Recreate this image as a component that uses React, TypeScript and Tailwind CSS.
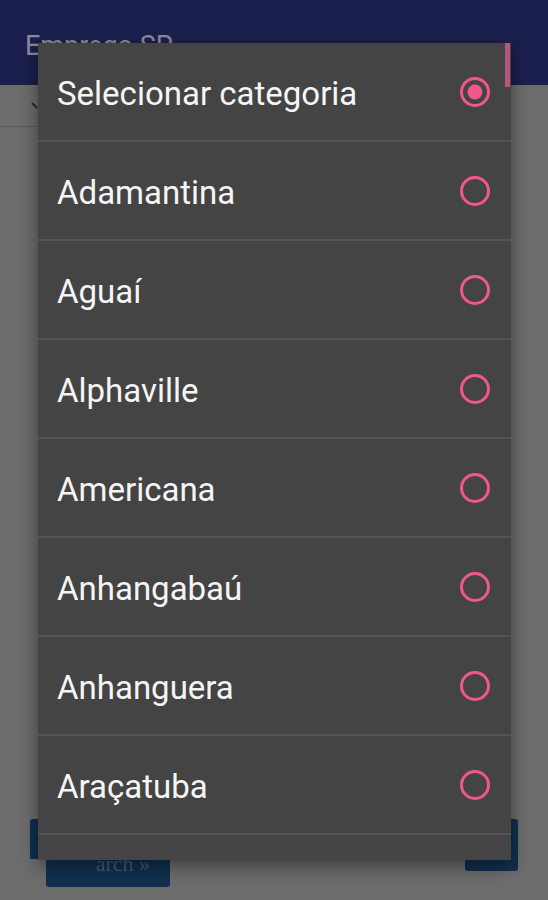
const cities = [
  "Selecionar categoria",
  "Adamantina",
  "Aguaí",
  "Alphaville",
  "Americana",
  "Anhangabaú",
  "Anhanguera",
  "Araçatuba",
  "Araraquara",
];

function Radio({ checked }: { checked: boolean }) {
  return (
    <svg width="32" height="32" viewBox="0 0 32 32">
      <circle cx="16" cy="16" r="13.5" fill="none" stroke="#f3578a" strokeWidth="3" />
      {checked && <circle cx="16" cy="16" r="7.5" fill="#f3578a" />}
    </svg>
  );
}

export default function App() {
  return (
    <div className="relative w-[548px] h-[900px] overflow-hidden bg-[#6d6d6d] font-['Roboto',sans-serif]">
      {/* page behind the dialog */}
      <header className="h-[85px] bg-[#1b1f4d] pl-[25px] pt-[26px]">
        <span className="text-[27px] text-[#8b8c98]">Emprego SP</span>
      </header>
      <div className="flex items-center h-[42px] w-[60px] pl-[30px] border-b border-[#5a5a5a]">
        <svg width="12" height="12" viewBox="0 0 12 12">
          <path d="M2 3 L7 8" stroke="#2a2a2a" strokeWidth="2" />
        </svg>
      </div>
      <div className="flex justify-between px-[30px] mt-[692px]">
        <div className="flex flex-col">
          <div className="w-[120px] h-[40px] rounded-t-[3px] bg-[#10304f]" />
          <div className="ml-[16px] -mt-[30px] w-[124px] h-[58px] rounded-[3px] bg-[#10304f] flex items-end justify-end pr-[20px] pb-[12px] text-[22px] leading-none text-[#3d5c7c] font-['Liberation_Serif',serif]">
            arch »
          </div>
        </div>
        <div className="w-[53px] h-[52px] rounded-[3px] bg-[#10304f]" />
      </div>

      {/* dialog */}
      <div className="absolute left-[38px] top-[43px] w-[473px] h-[817px] overflow-hidden bg-[#444444] shadow-[0_6px_18px_rgba(0,0,0,0.45)]">
        <div className="absolute right-[1px] top-0 w-[5px] h-[44px] bg-[#b0577a]" />
        {cities.map((c, i) => (
          <div
            key={c}
            className="flex items-center justify-between h-[99px] pl-[19px] pr-[20px] border-b-2 border-[#545454]"
          >
            <span className="mt-[5px] text-[33px] text-[#f5f5f5]">{c}</span>
            <Radio checked={i === 0} />
          </div>
        ))}
      </div>
    </div>
  );
}
